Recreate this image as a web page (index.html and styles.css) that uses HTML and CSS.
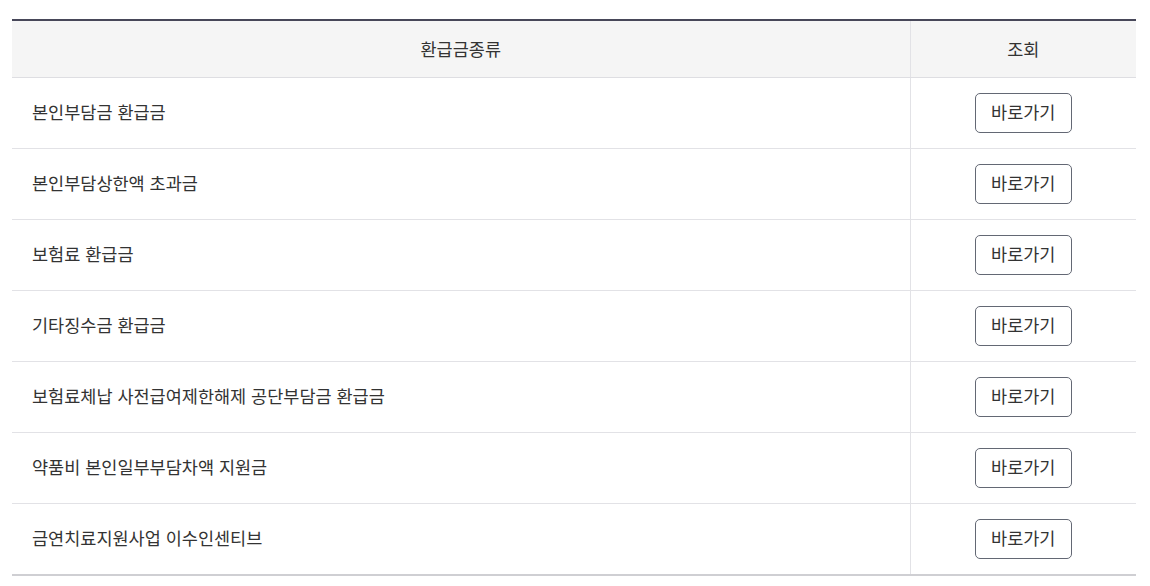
FILE: index.html
```html
<!DOCTYPE html>
<html lang="ko">
<head>
<meta charset="utf-8">
<link rel="stylesheet" href="styles.css">
</head>
<body>
<div class="wrap">
<table class="refund">
  <colgroup><col class="c-name"><col class="c-act"></colgroup>
  <thead>
    <tr><th>환급금종류</th><th class="act">조회</th></tr>
  </thead>
  <tbody>
    <tr><td>본인부담금 환급금</td><td class="act"><button class="go">바로가기</button></td></tr>
    <tr><td>본인부담상한액 초과금</td><td class="act"><button class="go">바로가기</button></td></tr>
    <tr><td>보험료 환급금</td><td class="act"><button class="go">바로가기</button></td></tr>
    <tr><td>기타징수금 환급금</td><td class="act"><button class="go">바로가기</button></td></tr>
    <tr><td>보험료체납 사전급여제한해제 공단부담금 환급금</td><td class="act"><button class="go">바로가기</button></td></tr>
    <tr><td>약품비 본인일부부담차액 지원금</td><td class="act"><button class="go">바로가기</button></td></tr>
    <tr><td>금연치료지원사업 이수인센티브</td><td class="act"><button class="go">바로가기</button></td></tr>
  </tbody>
</table>
</div>
</body>
</html>
```
FILE: styles.css
```css
html, body {
  margin: 0;
  padding: 0;
  background: #fff;
}
body {
  font-family: "Noto Sans CJK KR", "Noto Sans", sans-serif;
  color: #333;
}
.wrap {
  padding: 19px 14px 0 12px;
}
.refund {
  width: 100%;
  border-collapse: collapse;
  table-layout: fixed;
  border-top: 2px solid #474759;
  border-bottom: 2px solid #cfcfd3;
}
.c-name { width: 898px; }
.refund th {
  height: 54px;
  padding: 0 0 2px;
  background: #f5f5f5;
  font-size: 17.5px;
  font-weight: 400;
  color: #333;
  text-align: center;
  border-bottom: 1px solid #dedee2;
}
.refund th.act {
  border-left: 1px solid #e2e2e6;
}
.refund td {
  height: 67px;
  padding: 0 0 3px 20px;
  font-size: 17.5px;
  color: #333;
  border-bottom: 1px solid #e2e2e6;
}
.refund tbody tr:last-child td {
  border-bottom: none;
}
.refund td.act {
  border-left: 1px solid #e2e2e6;
  text-align: center;
  padding: 0;
  height: 70px;
}
.go {
  box-sizing: border-box;
  width: 97px;
  height: 40px;
  padding: 0 0 2px;
  margin-top: -1px;
  border: 1px solid #636874;
  border-radius: 5px;
  background: #fff;
  font-family: inherit;
  font-size: 17.5px;
  color: #333;
  cursor: pointer;
}
```
